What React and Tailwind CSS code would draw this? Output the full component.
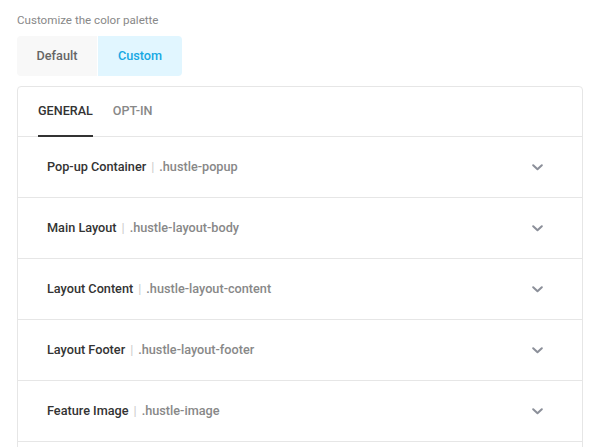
import React from "react";

const rows = [
  ["Pop-up Container", ".hustle-popup"],
  ["Main Layout", ".hustle-layout-body"],
  ["Layout Content", ".hustle-layout-content"],
  ["Layout Footer", ".hustle-layout-footer"],
  ["Feature Image", ".hustle-image"],
];

function Chevron() {
  return (
    <svg width="11" height="7" viewBox="0 0 11 7" className="shrink-0">
      <path d="M1.2 1.2 L5.5 5.3 L9.8 1.2" fill="none" stroke="#8b8f99" strokeWidth="2" strokeLinecap="round" strokeLinejoin="round" />
    </svg>
  );
}

export default function App() {
  return (
    <div
      className="w-[610px] h-[447px] overflow-hidden bg-white pl-[17px] pt-[12px]"
      style={{ fontFamily: "Roboto, 'Liberation Sans', sans-serif" }}
    >
      <div className="text-[11.6px] leading-[16px] text-[#888888]">Customize the color palette</div>
      <div className="mt-[8px] flex h-[40px] w-[165px] overflow-hidden rounded-[4px]">
        <div className="flex w-[80px] items-center justify-center bg-[#f8f8f8] text-[12.7px] font-medium text-[#666666]">
          Default
        </div>
        <div className="w-[1px] bg-white" />
        <div className="flex flex-1 items-center justify-center bg-[#e1f6ff] text-[12.7px] font-medium text-[#17a8e3]">
          Custom
        </div>
      </div>
      <div className="mt-[10px] h-[400px] w-[566px] rounded-[4px] border border-[#e6e6e6]">
        <div className="flex h-[50px] gap-[20px] border-b border-[#e6e6e6] pl-[20px]">
          <div className="relative flex items-center text-[12.6px] font-medium text-[#333333]">
            GENERAL
            <div className="absolute bottom-[-1px] left-0 right-0 h-[2px] bg-[#333333]" />
          </div>
          <div className="flex items-center text-[12.6px] font-medium text-[#888888]">OPT-IN</div>
        </div>
        {rows.map(([title, cls]) => (
          <div
            key={title}
            className="flex h-[61px] items-center justify-between border-b border-[#e6e6e6] pl-[29px] pr-[39px]"
          >
            <div className="flex items-center text-[12.7px] font-medium">
              <span className="text-[#333333]">{title}</span>
              <span className="mx-[5px] font-normal text-[#cccccc]">|</span>
              <span className="text-[#888888]">{cls}</span>
            </div>
            <Chevron />
          </div>
        ))}
      </div>
    </div>
  );
}
